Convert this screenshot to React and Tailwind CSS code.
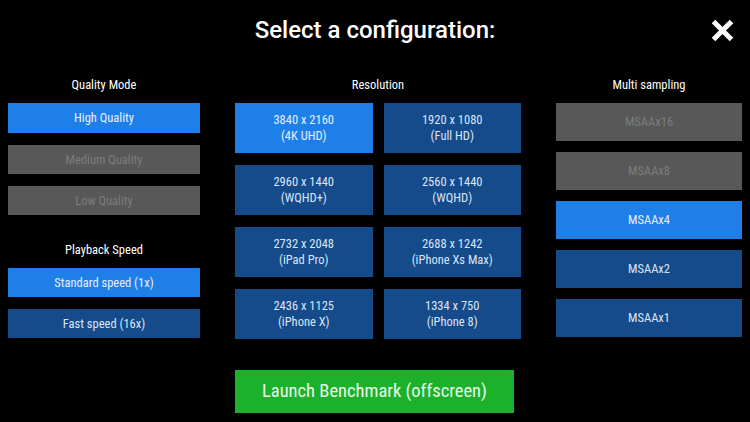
import React from 'react';

const font = { fontFamily: '"Roboto Condensed", Roboto, "Liberation Sans", sans-serif' };
const titleFont = { fontFamily: 'Roboto, "Liberation Sans", sans-serif' };

const styles = {
  on: 'bg-[#1f7fe9] text-[#e6f0ff]',
  off: 'bg-[#154a8b] text-[#dbe6f5]',
  disabled: 'bg-[#585858] text-[#7c7c7c]',
};

const Btn = ({ kind, className, children }) => (
  <div className={`flex flex-col items-center justify-center text-[12.5px] leading-[16px] ${styles[kind]} ${className}`}>
    {children}
  </div>
);

const Label = ({ children, className = '' }) => (
  <div className={`text-center text-[12.5px] text-white leading-[16px] ${className}`}>{children}</div>
);

const resolutions = [
  ['3840 x 2160', '(4K UHD)', 'on'],
  ['1920 x 1080', '(Full HD)', 'off'],
  ['2960 x 1440', '(WQHD+)', 'off'],
  ['2560 x 1440', '(WQHD)', 'off'],
  ['2732 x 2048', '(iPad Pro)', 'off'],
  ['2688 x 1242', '(iPhone Xs Max)', 'off'],
  ['2436 x 1125', '(iPhone X)', 'off'],
  ['1334 x 750', '(iPhone 8)', 'off'],
];

const msaa = [
  ['MSAAx16', 'disabled'],
  ['MSAAx8', 'disabled'],
  ['MSAAx4', 'on'],
  ['MSAAx2', 'off'],
  ['MSAAx1', 'off'],
];

export default function App() {
  return (
    <div className="w-[750px] h-[422px] bg-black overflow-hidden" style={font}>
      {/* header */}
      <div className="grid grid-cols-[1fr_auto_1fr] items-center h-[58px] pt-[2px]">
        <div />
        <h1 className="text-[24px] font-medium text-white leading-none" style={titleFont}>Select a configuration:</h1>
        <div className="flex justify-end pr-[16px]">
          <svg width="23" height="23" viewBox="0 0 23 23">
            <path d="M2.5 2.5 L20.5 20.5 M20.5 2.5 L2.5 20.5" stroke="white" strokeWidth="5" />
          </svg>
        </div>
      </div>

      <div className="flex px-2 gap-[35px] pt-[19px]">
        {/* quality / playback */}
        <div className="w-[192px] flex flex-col">
          <Label className="mb-[10px]">Quality Mode</Label>
          <div className="flex flex-col gap-[12px]">
            <Btn kind="on" className="h-[30px]">High Quality</Btn>
            <Btn kind="disabled" className="h-[29px]">Medium Quality</Btn>
            <Btn kind="disabled" className="h-[29px]">Low Quality</Btn>
          </div>
          <Label className="mt-[27px] mb-[10px]">Playback Speed</Label>
          <div className="flex flex-col gap-[12px]">
            <Btn kind="on" className="h-[29px]">Standard speed (1x)</Btn>
            <Btn kind="off" className="h-[29px]">Fast speed (16x)</Btn>
          </div>
        </div>

        {/* resolution */}
        <div className="w-[286px] flex flex-col">
          <Label className="mb-[10px]">Resolution</Label>
          <div className="grid grid-cols-2 gap-x-[11px] gap-y-[12px]">
            {resolutions.map(([res, name, kind]) => (
              <Btn key={res} kind={kind} className="h-[50px]">
                <span>{res}</span>
                <span>{name}</span>
              </Btn>
            ))}
          </div>
          <div className="mt-[31px] w-[279px] h-[43px] bg-[#1cb12b] text-[#e8f7e8] text-[18.5px] flex items-center justify-center">
            Launch Benchmark (offscreen)
          </div>
        </div>

        {/* multi sampling */}
        <div className="w-[186px] flex flex-col">
          <Label className="mb-[10px]">Multi sampling</Label>
          <div className="flex flex-col gap-[11.5px]">
            {msaa.map(([name, kind]) => (
              <Btn key={name} kind={kind} className="h-[37.5px]">{name}</Btn>
            ))}
          </div>
        </div>
      </div>
    </div>
  );
}
